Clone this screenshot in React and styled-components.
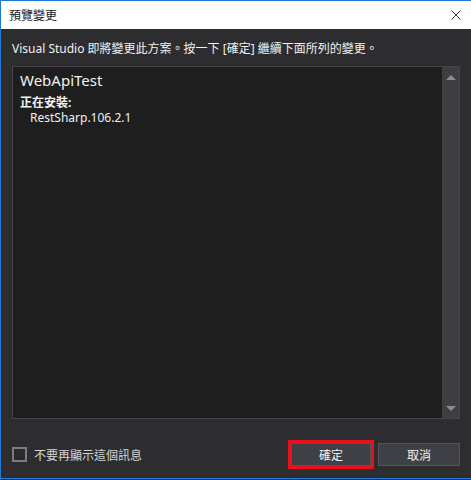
import React from "react";
import styled, { createGlobalStyle } from "styled-components";

const Global = createGlobalStyle`
  html, body { margin: 0; padding: 0; background: #2d2d30; }
  * { box-sizing: border-box; }
`;

const FONT = `"Segoe UI", "Noto Sans", "Noto Sans CJK TC", sans-serif`;

const Window = styled.div`
  width: 471px;
  height: 479px;
  border-left: 1px solid #1c7cd5;
  border-top: 1px solid #1c7cd5;
  border-bottom: 1px solid #1c7cd5;
  display: flex;
  flex-direction: column;
  font-family: ${FONT};
  background: #2d2d30;
`;

const TitleBar = styled.div`
  height: 28px;
  background: #ffffff;
  display: flex;
  align-items: center;
  justify-content: space-between;
  padding: 0 10px 0 8px;
  flex: none;
`;

const Title = styled.span`
  font-size: 12px;
  color: #1a1a1a;
`;

const Close = styled.span`
  display: flex;
  width: 10px;
  height: 10px;
`;

const Body = styled.div`
  flex: 1;
  display: flex;
  flex-direction: column;
  padding: 0 11px 0 11px;
`;

const Description = styled.div`
  margin-top: 12px;
  font-size: 12px;
  line-height: 16px;
  color: #f1f1f1;
  white-space: nowrap;
`;

const Panel = styled.div`
  margin-top: 9px;
  height: 353px;
  border: 1px solid #46464a;
  display: flex;
  background: #1e1e1e;
`;

const Content = styled.div`
  flex: 1;
  padding: 3px 7px;
  color: #f1f1f1;
`;

const Project = styled.div`
  font-size: 15px;
  line-height: 20px;
  margin-bottom: 5px;
`;

const Heading = styled.div`
  font-size: 12px;
  line-height: 15px;
  font-weight: bold;
`;

const Item = styled.div`
  font-size: 12px;
  line-height: 15px;
  padding-left: 10px;
`;

const Scrollbar = styled.div`
  width: 17px;
  background: #3e3e42;
  display: flex;
  flex-direction: column;
  justify-content: space-between;
  align-items: center;
  padding: 8px 0 7px;
`;

const Arrow = styled.span`
  width: 0;
  height: 0;
  border-left: 5px solid transparent;
  border-right: 5px solid transparent;
  ${(p) =>
    p.$down
      ? "border-top: 5px solid #8c8c90;"
      : "border-bottom: 5px solid #8c8c90;"}
`;

const Footer = styled.div`
  display: flex;
  align-items: center;
  padding: 24px 0 0;
`;

const CheckLabel = styled.label`
  display: flex;
  align-items: center;
  gap: 7px;
  font-size: 12px;
  color: #d6d6d6;
  flex: 1;
`;

const Box = styled.span`
  width: 15px;
  height: 15px;
  border: 2px solid #7c7c80;
  background: #2a2a2c;
  margin-top: -1px;
`;

const Buttons = styled.div`
  display: flex;
  gap: 7px;
`;

const Button = styled.button`
  width: ${(p) => p.$w}px;
  height: 23px;
  background: #3f3f46;
  border: 1px solid #555558;
  color: #f1f1f1;
  font-family: ${FONT};
  font-size: 12px;
  padding: 0;
  outline: ${(p) => (p.$highlight ? "3px solid #e8111b" : "none")};
  outline-offset: 0;
`;

export default function App() {
  return (
    <>
      <Global />
      <Window>
        <TitleBar>
          <Title>預覽變更</Title>
          <Close>
            <svg width="10" height="10" viewBox="0 0 10 10">
              <path d="M0.5 0.5 L9.5 9.5 M9.5 0.5 L0.5 9.5" stroke="#333" strokeWidth="1" />
            </svg>
          </Close>
        </TitleBar>
        <Body>
          <Description>
            Visual Studio 即將變更此方案。按一下 [確定] 繼續下面所列的變更。
          </Description>
          <Panel>
            <Content>
              <Project>WebApiTest</Project>
              <Heading>正在安裝:</Heading>
              <Item>RestSharp.106.2.1</Item>
            </Content>
            <Scrollbar>
              <Arrow />
              <Arrow $down />
            </Scrollbar>
          </Panel>
          <Footer>
            <CheckLabel>
              <Box />
              不要再顯示這個訊息
            </CheckLabel>
            <Buttons>
              <Button $highlight $w={80}>確定</Button>
              <Button $w={82}>取消</Button>
            </Buttons>
          </Footer>
        </Body>
      </Window>
    </>
  );
}
